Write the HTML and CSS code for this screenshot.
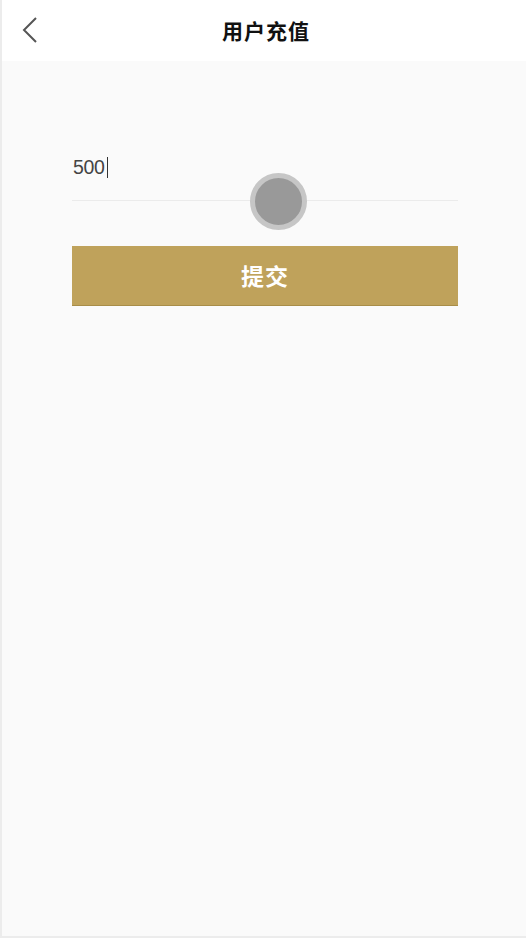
FILE: index.html
```html
<!DOCTYPE html>
<html lang="zh">
<head>
<meta charset="utf-8">
<title>用户充值</title>
<link rel="stylesheet" href="styles.css">
</head>
<body>
<div class="app">
  <header class="topbar">
    <button class="back" aria-label="返回">
      <svg width="16" height="26" viewBox="0 0 16 26"><path d="M14 1 L2 13 L14 25" fill="none" stroke="#555" stroke-width="2"/></svg>
    </button>
    <h1 class="title">用户充值</h1>
  </header>
  <main class="content">
    <div class="field">
      <span class="value">500</span><span class="caret"></span>
      <span class="touch"></span>
    </div>
    <button class="submit">提交</button>
  </main>
</div>
</body>
</html>
```
FILE: styles.css
```css
* { box-sizing: border-box; }
html, body { margin: 0; padding: 0; }
body {
  font-family: "Noto Sans CJK SC", "Noto Sans", sans-serif;
  background: #fff;
  width: 526px;
  height: 940px;
}
.app {
  height: 938px;
  display: flex;
  flex-direction: column;
  border-left: 2px solid #ececec;
  border-bottom: 2px solid #ececec;
  background: #fafafa;
}
.topbar {
  height: 61px;
  background: #fff;
  display: flex;
  align-items: center;
  justify-content: center;
  position: relative;
}
.back {
  position: absolute;
  left: 19px;
  top: 17px;
  border: 0;
  background: none;
  padding: 0;
  width: 18px;
  height: 26px;
}
.title {
  margin: 0 0 2px 0;
  font-size: 21px;
  font-weight: 700;
  color: #111;
  letter-spacing: 1px;
  padding-left: 4px;
}
.content {
  flex: 1;
  padding: 92px 66px 0 70px;
  display: flex;
  flex-direction: column;
}
.field {
  position: relative;
  height: 48px;
  width: 386px;
  border-bottom: 1px solid #ebebeb;
  display: flex;
  align-items: flex-start;
  padding-top: 3px;
  padding-left: 1px;
}
.value {
  font-family: "Liberation Sans", Arial, sans-serif;
  font-size: 19.5px;
  color: #444;
  line-height: 22px;
  letter-spacing: -0.3px;
}
.caret {
  display: inline-block;
  width: 1px;
  height: 21px;
  background: #333;
  margin-top: 1px;
  margin-left: 2px;
}
.touch {
  position: absolute;
  left: 178px;
  top: 20px;
  width: 57px;
  height: 57px;
  border-radius: 50%;
  background: #999;
  border: 5px solid #c6c6c6;
}
.submit {
  margin-top: 45px;
  height: 60px;
  width: 386px;
  border: 0;
  border-bottom: 1px solid #a88d48;
  background: #bfa25b;
  color: #fff;
  font-family: "Noto Sans CJK SC", sans-serif;
  font-size: 23px;
  font-weight: 700;
  letter-spacing: 1px;
  padding: 0 0 2px 0;
}
```
